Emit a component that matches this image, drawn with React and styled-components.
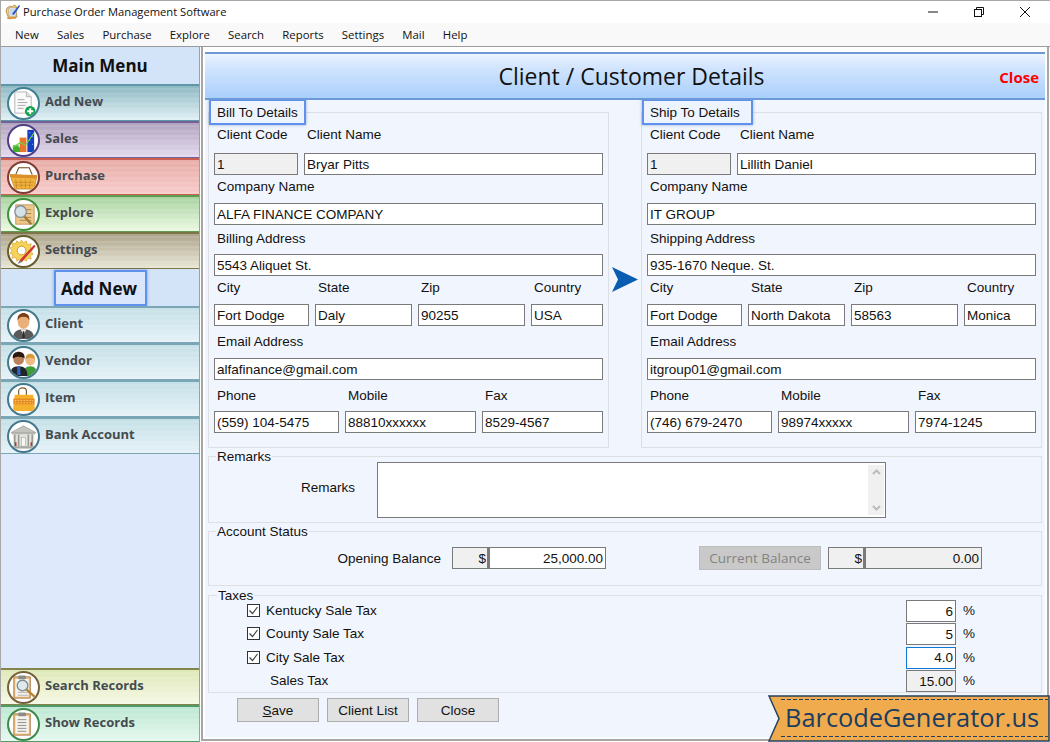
import React from 'react';
import styled, { createGlobalStyle } from 'styled-components';

const GlobalStyle = createGlobalStyle`
  html, body {
    margin: 0;
    padding: 0;
    background: #fff;
  }
  * {
    box-sizing: border-box;
  }
`;

const tones = {
  teal: { border: '#5f97a8', from: '#8db8c3', to: '#e0f0f4' },
  violet: { border: '#73619a', from: '#b2a3bf', to: '#e3daee' },
  red: { border: '#c9604f', from: '#e8ada6', to: '#f7cbcb' },
  green: { border: '#5f9c50', from: '#a8d3a0', to: '#ecf9e2' },
  khaki: { border: '#7d7647', from: '#ada48b', to: '#e9e6d6' },
  sky: { border: '#7aa6b6', from: '#c5e0e7', to: '#e5f2f8' },
  olive: { border: '#84834c', from: '#dfe8b8', to: '#f5f8e4' },
  mint: { border: '#4e9a68', from: '#bde8d2', to: '#e6f9ef' },
};

const Window = styled.div`
  width: 1050px;
  height: 742px;
  position: relative;
  overflow: hidden;
  background: #fff;
  border-top: 1px solid #a8a8a8;
  border-left: 1px solid #a8a8a8;
  display: flex;
  flex-direction: column;
  font-family: "Liberation Sans", Arial, sans-serif;
  font-size: 13.5px;
  color: #111;
`;

const TitleBar = styled.div`
  height: 22px;
  flex: none;
  display: flex;
  align-items: center;
  padding-left: 4px;
  padding-bottom: 1px;
  background: #fff;
  font-family: "Open Sans", sans-serif;
  font-size: 11.2px;
  color: #111;
`;

const AppTitle = styled.span`
  margin-left: 2px;
`;

const WindowButtons = styled.div`
  margin-left: auto;
  display: flex;
  align-items: center;
  gap: 34px;
  padding-right: 19px;
`;

const MenuBar = styled.div`
  height: 24px;
  flex: none;
  display: flex;
  align-items: center;
  gap: 18.2px;
  padding-left: 14px;
  background: #f9f9f9;
  font-family: "Open Sans", sans-serif;
  font-size: 11.4px;
  color: #111;
  border-bottom: 1px solid #9c9c9c;
`;

const Body = styled.div`
  flex: 1;
  min-height: 0;
  display: flex;
`;

const Sidebar = styled.div`
  width: 199px;
  flex: none;
  display: flex;
  flex-direction: column;
  background: #deeafc;
  border-right: 1px solid #8fa6b0;
  font-family: "Open Sans", sans-serif;
`;

const SideHeader = styled.div`
  height: ${(p) => p.$height}px;
  flex: none;
  display: flex;
  align-items: ${(p) => (p.$boxed ? 'flex-end' : 'center')};
  justify-content: center;
  background: #d3e3f8;
  font-size: 17px;
  font-weight: 700;
  color: #111;
`;

const BoxedTitle = styled.span`
  width: 93px;
  height: 36px;
  margin-left: 1px;
  padding-right: 3px;
  display: flex;
  align-items: center;
  justify-content: center;
  border: 2px solid #5f92ec;
  box-shadow: 0 0 3px rgba(60, 90, 150, 0.5);
  background: #d9e6fb;
`;

const SideItem = styled.div`
  height: 37px;
  flex: none;
  display: flex;
  align-items: center;
  gap: 5px;
  padding-left: 6px;
  border-top: 2px solid ${(p) => tones[p.$tone].border};
  border-bottom: 1px solid ${(p) => tones[p.$tone].border};
  background:
    repeating-linear-gradient(0deg, rgba(255, 255, 255, 0.1) 0 2px, rgba(255, 255, 255, 0) 2px 5px),
    linear-gradient(180deg, ${(p) => tones[p.$tone].from}, ${(p) => tones[p.$tone].to});
  font-size: 13px;
  font-weight: 700;
  color: #444b50;
`;

const SideLabel = styled.span`
  margin-bottom: 4px;
`;

const IconRing = styled.span`
  width: 33px;
  height: 33px;
  flex: none;
  border-radius: 50%;
  background: #fff;
  border: 2px solid ${(p) => p.$color};
  display: flex;
  align-items: center;
  justify-content: center;
  overflow: hidden;
`;

const SideSpacer = styled.div`
  flex: 1;
`;

const Main = styled.div`
  flex: 1;
  min-width: 0;
  margin-left: 1px;
  margin-right: 1px;
  margin-bottom: 1px;
  padding: 5px 2px 2px 2px;
  border: solid #a6a6a6;
  border-width: 0 2px 2px 2px;
  display: flex;
`;

const Panel = styled.div`
  flex: 1;
  min-width: 0;
  background: #f1f6fe;
  display: flex;
  flex-direction: column;
`;

const PanelHeader = styled.div`
  height: 48px;
  flex: none;
  position: relative;
  display: flex;
  align-items: center;
  justify-content: center;
  border-top: 2px solid #6d9ad6;
  border-bottom: 2px solid #6d9ad6;
  background: linear-gradient(180deg, #edf5ff 0%, #d6e7fe 25%, #a9cffb 100%);
`;

const PanelTitle = styled.h1`
  margin: 0 0 0 13px;
  font-family: "Open Sans", sans-serif;
  font-size: 23px;
  font-weight: 400;
  color: #111;
`;

const CloseLink = styled.span`
  position: absolute;
  right: 6px;
  top: 13px;
  font-family: "Open Sans", sans-serif;
  font-size: 15px;
  font-weight: 700;
  color: #ff0000;
`;

const Content = styled.div`
  flex: 1;
  min-height: 0;
  padding: 0 3px;
  display: flex;
  flex-direction: column;
`;

const AddressRow = styled.div`
  display: flex;
  margin-top: -1px;
`;

const ArrowSlot = styled.div`
  width: 32px;
  flex: none;
  padding-top: 168px;
  display: flex;
  justify-content: center;
`;

const Group = styled.fieldset`
  margin: ${(p) => p.$top || 0}px 0 0 0;
  padding: 0 ${(p) => p.$side || 0}px ${(p) => p.$bottom || 0}px;
  min-width: 0;
  border: 1px solid #dcdfe4;
  flex: ${(p) => (p.$half ? '0 0 401px' : 'none')};
  width: ${(p) => (p.$half ? '401px' : 'auto')};
  height: ${(p) => (p.$height ? `${p.$height}px` : 'auto')};
`;

const GroupLegend = styled.legend`
  margin-left: ${(p) => p.$left || 0}px;
  padding: 0 1px;
  height: 12px;
  line-height: 14px;
  color: #111;
`;

const BoxLegend = styled.legend`
  width: ${(p) => p.$width}px;
  margin-left: -5px;
  padding: 0 0 0 6px;
  height: 26px;
  line-height: 23px;
  border: 2px solid #5f92ec;
  box-shadow: 0 0 3px rgba(60, 90, 150, 0.45);
  background: #eef4fe;
  color: #111;
`;

const Cells = styled.div`
  display: grid;
  grid-template-columns: ${(p) => p.$cols};
  column-gap: 6px;
  margin-top: ${(p) => p.$top}px;
`;

const FieldLabel = styled.label`
  display: block;
  height: 20px;
  line-height: 20px;
  padding-left: 3px;
  white-space: nowrap;
`;

const Field = styled.input`
  width: 100%;
  height: 22px;
  margin: 0;
  padding: 0 2px;
  border: 1px solid ${(p) => (p.$focus ? '#0f78d4' : '#7a7a7a')};
  border-radius: 0;
  outline: none;
  background: ${(p) => (p.$muted ? '#f0f0f0' : '#fff')};
  font-family: inherit;
  font-size: 13.5px;
  color: #111;
  text-align: ${(p) => (p.$right ? 'right' : 'left')};
`;

const RemarksRow = styled.div`
  display: flex;
  height: 56px;
`;

const RemarksLabel = styled.label`
  width: 146px;
  flex: none;
  padding-top: 18px;
  line-height: 16px;
  text-align: right;
`;

const RemarksBox = styled.div`
  width: 509px;
  margin-left: 22px;
  display: flex;
  justify-content: flex-end;
  padding: 2px 1px 2px 0;
  border: 1px solid #7a7a7a;
  background: #fff;
`;

const ScrollTrack = styled.div`
  width: 16px;
  display: flex;
  flex-direction: column;
  justify-content: space-between;
  align-items: center;
  padding: 4px 0;
  background: #f0f0f0;
`;

const BalanceRow = styled.div`
  display: flex;
  align-items: center;
  height: 24px;
  margin-top: 9px;
`;

const BalanceLabel = styled.label`
  width: 232px;
  flex: none;
  text-align: right;
`;

const Money = styled.div`
  display: flex;
  margin-left: ${(p) => p.$left}px;
`;

const Currency = styled(Field)`
  width: 37px;
  flex: none;
  padding-right: 1px;
  border-right-width: 2px;
`;

const Amount = styled(Field)`
  width: 117px;
  flex: none;
`;

const DisabledButton = styled.button`
  width: 122px;
  height: 24px;
  margin-left: 93px;
  padding: 0;
  border: 1px solid #bdbdbd;
  background: #c9c9c9;
  font-family: "Open Sans", sans-serif;
  font-size: 13.5px;
  color: #838383;
`;

const TaxList = styled.div`
  margin-top: -1px;
`;

const TaxRow = styled.div`
  display: flex;
  align-items: flex-start;
  height: 23.4px;
  line-height: 22px;
  padding-left: ${(p) => p.$indent}px;
`;

const Tick = styled.span`
  width: 13px;
  height: 13px;
  flex: none;
  margin: 4px 6px 0 0;
  border: 1px solid #333;
  background: #fff;
  display: flex;
  align-items: center;
  justify-content: center;
`;

const TaxValue = styled.div`
  margin-left: auto;
  width: 50px;
  flex: none;
`;

const Percent = styled.span`
  width: 85px;
  flex: none;
  padding-left: 7px;
`;

const Footer = styled.div`
  display: flex;
  gap: 8px;
  padding: 5px 0 0 29px;
`;

const ActionButton = styled.button`
  width: 82px;
  height: 24px;
  padding: 0;
  border: 1px solid #adadad;
  background: #e1e1e1;
  font-family: "Liberation Sans", Arial, sans-serif;
  font-size: 13.5px;
  color: #111;
`;

const Banner = styled.div`
  position: absolute;
  left: 767px;
  top: 694px;
  width: 282px;
  height: 47px;
  display: flex;
  align-items: center;
  padding: 0 0 3px 17px;
  font-family: "Open Sans", sans-serif;
  font-size: 25.4px;
  color: #1d3d5e;
`;

const BannerShape = styled.svg`
  position: absolute;
  left: 0;
  top: 0;
`;

const BannerText = styled.span`
  position: relative;
`;

const AppIcon = () => (
  <svg width="16" height="18" viewBox="0 0 16 18">
    <path d="M2 5l3-2 2 1 2-2 2 1 1 3-1 2 1 6-8 2-2-5-1-3z" fill="#f2cf7a" stroke="#a8792a" strokeWidth=".7" />
    <rect x="4" y="5" width="7" height="8" fill="#fff" stroke="#7f8fb0" strokeWidth=".6" />
    <path d="M5 7h5M5 9h5M5 11h3" stroke="#6f86c0" strokeWidth=".7" />
    <path d="M7 11l7-9 1 1-6 9z" fill="#2a55c8" />
    <path d="M2 15h9" stroke="#d9862a" strokeWidth="1.2" />
  </svg>
);

const Minimize = () => (
  <svg width="12" height="12" viewBox="0 0 12 12"><path d="M1 6h10" stroke="#111" /></svg>
);

const Restore = () => (
  <svg width="12" height="12" viewBox="0 0 12 12" fill="none" stroke="#111">
    <rect x="1.5" y="3.5" width="7" height="7" />
    <path d="M3.5 3.5v-2h7v7h-2" />
  </svg>
);

const CloseX = () => (
  <svg width="12" height="12" viewBox="0 0 12 12"><path d="M1 1l10 10M11 1L1 11" stroke="#111" /></svg>
);

const Check = () => (
  <svg width="11" height="11" viewBox="0 0 11 11"><path d="M1.5 5.5l3 3 5-6.5" fill="none" stroke="#444" strokeWidth="1.2" /></svg>
);

const Chevron = ({ down }) => (
  <svg width="9" height="6" viewBox="0 0 9 6">
    <path d={down ? 'M1 1l3.5 3.5L8 1' : 'M1 5l3.5-3.5L8 5'} fill="none" stroke="#bcbcbc" strokeWidth="2" />
  </svg>
);

const Clipboard = () => (
  <>
    <rect x="5" y="4" width="17" height="22" fill="#e9b87a" stroke="#a56d33" strokeWidth=".8" />
    <rect x="6.5" y="6" width="14" height="18.5" fill="#f5f3ec" />
    <rect x="9.5" y="2.5" width="8" height="4" rx="1" fill="#8b8b8b" />
  </>
);

const icons = {
  addNew: (
    <>
      <path d="M6 3h12l5 5v17H6z" fill="#fafafa" stroke="#a3a3a3" strokeWidth=".8" />
      <path d="M18 3v5h5" fill="#dedede" stroke="#a3a3a3" strokeWidth=".7" />
      <path d="M9 11h7M9 14h10M9 17h8M9 20h6" stroke="#a8a8a8" />
      <circle cx="22" cy="23" r="5.5" fill="#13a04a" />
      <path d="M22 19.8v6.4M18.8 23h6.4" stroke="#fff" strokeWidth="2" />
    </>
  ),
  sales: (
    <>
      <path d="M3 27l6-5h6v5z" fill="#3cae2c" />
      <rect x="4" y="20" width="6" height="7" fill="#41b22e" />
      <rect x="11" y="12" width="7" height="15" fill="#e8762a" />
      <rect x="19" y="4" width="7" height="23" fill="#1240c0" />
      <path d="M4 22l8-5 5 3 9-13" fill="none" stroke="#6fd04a" strokeWidth="1.2" />
      <path d="M21 7h1M24 11h1M21 15h1M24 19h1" stroke="#8fb0ff" />
    </>
  ),
  purchase: (
    <>
      <path d="M7 12L10 5h11l3 7" fill="none" stroke="#6b4a22" strokeWidth="1.1" />
      <path d="M1 12l28 1-3 14H6z" fill="#f1b43c" stroke="#b77a1d" strokeWidth=".7" />
      <path d="M1 12l28 1-1 3-26-1z" fill="#dc8e28" />
      <path d="M7 17l1 9M12 17l1 9M17 17v9M22 17l-1 9M5 20h21M6 23h19" stroke="#c9852a" strokeWidth=".8" />
    </>
  ),
  explore: (
    <>
      <rect x="7" y="5" width="19" height="20" fill="#edc88c" stroke="#b58a4c" strokeWidth=".8" />
      <path d="M15 10h8M17 14h6M17 18h6M11 21h12" stroke="#b4843f" />
      <circle cx="12" cy="12" r="6" fill="#d5e3e8" stroke="#85919a" strokeWidth="1.4" />
      <path d="M16 17l7 8" stroke="#9f7a3a" strokeWidth="2.4" />
    </>
  ),
  settings: (
    <>
      <path d="M13 3l2 3 3-2 1 4 4-1-1 4 3 1-2 3 2 3-3 1 1 4-4-1-1 3-3-2-2 3-2-3-3 2-1-4-4 1 1-4-3-1 2-3-2-3 3-1-1-4 4 1 1-3 3 2z" fill="#f6d25c" stroke="#c79a26" strokeWidth=".6" />
      <circle cx="13" cy="14" r="4.500" fill="#fff" stroke="#c79a26" />
      <path d="M11 24L26 8l1.500 1.500L13 26z" fill="#cf3232" />
      <path d="M9 28l2-4 2 2z" fill="#777" />
    </>
  ),
  client: (
    <>
      <path d="M4 29c0-8 5-10 11-10s11 2 11 10z" fill="#5a5a5a" />
      <path d="M12 19l3 6 3-6z" fill="#eee" />
      <path d="M14.2 21h1.6l.6 7h-2.8z" fill="#2e2e2e" />
      <ellipse cx="15" cy="11" rx="6" ry="7.5" fill="#e9b07c" />
      <path d="M9 10c-1-6 3-8 6-8s7 2 6 8c-1-3-3-4-6-4s-5 1-6 4z" fill="#7c3f16" />
    </>
  ),
  vendor: (
    <>
      <path d="M15 29c0-7 2-10 7-10s7 3 7 10z" fill="#3f9a3a" />
      <circle cx="22" cy="13" r="5" fill="#eebb85" />
      <path d="M17 12c0-5 3-6 5-6s5 1 5 6c-2-2-7-3-10 0z" fill="#d49a3c" />
      <path d="M1 29c0-7 3-10 9-10s9 3 9 10z" fill="#23242a" />
      <path d="M8.5 19h3l.5 9h-3.500z" fill="#2b66c8" />
      <circle cx="10" cy="12" r="5.500" fill="#b9825a" />
      <path d="M4 11c-1-5 3-7 6-7s7 2 6 7c-2-2-8-3-12 0z" fill="#2a1a10" />
    </>
  ),
  item: (
    <>
      <path d="M10 11V6c0-4 8-4 8 0v5" fill="none" stroke="#7b5a2a" strokeWidth="1.2" />
      <path d="M6 10h19l2 17H4z" fill="#f5b02c" />
      <rect x="4.500" y="14" width="22" height="6" fill="#e58a1e" />
      <path d="M6 16h19M6 18.500h19" stroke="#fbd27a" strokeDasharray="1.500 1.500" />
    </>
  ),
  bank: (
    <>
      <path d="M15 4l13 7H2z" fill="#c4c4bf" stroke="#8e8e8a" strokeWidth=".6" />
      <rect x="3" y="11" width="24" height="2" fill="#b4b4ae" />
      <rect x="4" y="13" width="22" height="12" fill="#e4e4de" />
      <path d="M6 13v12M10 13v12M20 13v12M24 13v12" stroke="#9a9a94" strokeWidth="1.6" />
      <rect x="13" y="16" width="4" height="9" fill="#f6f6f2" stroke="#9a9a94" strokeWidth=".5" />
      <path d="M7 21v4M23 21v4" stroke="#a82a2a" strokeWidth="1.400" />
      <rect x="2" y="25" width="26" height="2.500" fill="#a9a9a3" />
    </>
  ),
  search: (
    <>
      <Clipboard />
      <path d="M9 20h11M9 23h11" stroke="#b0b0b0" />
      <circle cx="14" cy="13" r="5.500" fill="#dfe9ec" stroke="#7c8b92" strokeWidth="1.400" />
      <path d="M18 17l9 8" stroke="#b9822e" strokeWidth="2.400" />
    </>
  ),
  show: (
    <>
      <Clipboard />
      <path d="M9 10h9M9 13h9M9 16h9M9 19h9M9 22h9" stroke="#8c8c8c" />
    </>
  ),
};

const SideEntry = ({ tone, ring, icon, label }) => (
  <SideItem $tone={tone}>
    <IconRing $color={ring}>
      <svg width="29" height="29" viewBox="0 0 30 30">{icons[icon]}</svg>
    </IconRing>
    <SideLabel>{label}</SideLabel>
  </SideItem>
);

const topMenu = [
  { tone: 'teal', ring: '#3f7f90', icon: 'addNew', label: 'Add New' },
  { tone: 'violet', ring: '#4f3f85', icon: 'sales', label: 'Sales' },
  { tone: 'red', ring: '#7e3b32', icon: 'purchase', label: 'Purchase' },
  { tone: 'green', ring: '#3f8f3a', icon: 'explore', label: 'Explore' },
  { tone: 'khaki', ring: '#665c2c', icon: 'settings', label: 'Settings' },
];

const addMenu = [
  { tone: 'sky', ring: '#44788c', icon: 'client', label: 'Client' },
  { tone: 'sky', ring: '#44788c', icon: 'vendor', label: 'Vendor' },
  { tone: 'sky', ring: '#44788c', icon: 'item', label: 'Item' },
  { tone: 'sky', ring: '#44788c', icon: 'bank', label: 'Bank Account' },
];

const bottomMenu = [
  { tone: 'olive', ring: '#74603a', icon: 'search', label: 'Search Records' },
  { tone: 'mint', ring: '#3d8a48', icon: 'show', label: 'Show Records' },
];

const billTo = {
  title: 'Bill To Details',
  legendWidth: 97,
  addressLabel: 'Billing Address',
  code: '1',
  name: 'Bryar Pitts',
  company: 'ALFA FINANCE COMPANY',
  address: '5543 Aliquet St.',
  city: 'Fort Dodge',
  state: 'Daly',
  zip: '90255',
  country: 'USA',
  email: 'alfafinance@gmail.com',
  phone: '(559) 104-5475',
  mobile: '88810xxxxxx',
  fax: '8529-4567',
};

const shipTo = {
  title: 'Ship To Details',
  legendWidth: 111,
  addressLabel: 'Shipping Address',
  code: '1',
  name: 'Lillith Daniel',
  company: 'IT GROUP',
  address: '935-1670 Neque. St.',
  city: 'Fort Dodge',
  state: 'North Dakota',
  zip: '58563',
  country: 'Monica',
  email: 'itgroup01@gmail.com',
  phone: '(746) 679-2470',
  mobile: '98974xxxxx',
  fax: '7974-1245',
};

const AddressGroup = ({ data }) => (
  <Group $half $side={5} $height={349}>
    <BoxLegend $width={data.legendWidth}>{data.title}</BoxLegend>
    <Cells $cols="84px 299px" $top={0}>
      <FieldLabel>Client Code</FieldLabel>
      <FieldLabel>Client Name</FieldLabel>
    </Cells>
    <Cells $cols="84px 299px" $top={8}>
      <Field $muted readOnly value={data.code} />
      <Field readOnly value={data.name} />
    </Cells>
    <Cells $cols="1fr" $top={2}>
      <FieldLabel>Company Name</FieldLabel>
    </Cells>
    <Cells $cols="1fr" $top={6}>
      <Field readOnly value={data.company} />
    </Cells>
    <Cells $cols="1fr" $top={4}>
      <FieldLabel>{data.addressLabel}</FieldLabel>
    </Cells>
    <Cells $cols="1fr" $top={5}>
      <Field readOnly value={data.address} />
    </Cells>
    <Cells $cols="95px 97px 107px 72px" $top={2}>
      <FieldLabel>City</FieldLabel>
      <FieldLabel>State</FieldLabel>
      <FieldLabel>Zip</FieldLabel>
      <FieldLabel>Country</FieldLabel>
    </Cells>
    <Cells $cols="95px 97px 107px 72px" $top={6}>
      <Field readOnly value={data.city} />
      <Field readOnly value={data.state} />
      <Field readOnly value={data.zip} />
      <Field readOnly value={data.country} />
    </Cells>
    <Cells $cols="1fr" $top={6}>
      <FieldLabel>Email Address</FieldLabel>
    </Cells>
    <Cells $cols="1fr" $top={6}>
      <Field readOnly value={data.email} />
    </Cells>
    <Cells $cols="125px 131px 121px" $top={6}>
      <FieldLabel>Phone</FieldLabel>
      <FieldLabel>Mobile</FieldLabel>
      <FieldLabel>Fax</FieldLabel>
    </Cells>
    <Cells $cols="125px 131px 121px" $top={5}>
      <Field readOnly value={data.phone} />
      <Field readOnly value={data.mobile} />
      <Field readOnly value={data.fax} />
    </Cells>
  </Group>
);

const taxes = [
  { label: 'Kentucky Sale Tax', value: '6' },
  { label: 'County Sale Tax', value: '5' },
  { label: 'City Sale Tax', value: '4.0', focus: true },
];

const App = () => (
  <>
    <GlobalStyle />
    <Window>
      <TitleBar>
        <AppIcon />
        <AppTitle>Purchase Order Management Software</AppTitle>
        <WindowButtons>
          <Minimize />
          <Restore />
          <CloseX />
        </WindowButtons>
      </TitleBar>
      <MenuBar>
        {['New', 'Sales', 'Purchase', 'Explore', 'Search', 'Reports', 'Settings', 'Mail', 'Help'].map((m) => (
          <span key={m}>{m}</span>
        ))}
      </MenuBar>
      <Body>
        <Sidebar>
          <SideHeader $height={37}>Main Menu</SideHeader>
          {topMenu.map((item) => <SideEntry key={item.label} {...item} />)}
          <SideHeader $height={37} $boxed><BoxedTitle>Add New</BoxedTitle></SideHeader>
          {addMenu.map((item) => <SideEntry key={item.label} {...item} />)}
          <SideSpacer />
          {bottomMenu.map((item) => <SideEntry key={item.label} {...item} />)}
        </Sidebar>
        <Main>
          <Panel>
            <PanelHeader>
              <PanelTitle>Client / Customer Details</PanelTitle>
              <CloseLink>Close</CloseLink>
            </PanelHeader>
            <Content>
              <AddressRow>
                <AddressGroup data={billTo} />
                <ArrowSlot>
                  <svg width="26" height="25" viewBox="0 0 26 25">
                    <path d="M0 0l26 12.500L0 25l6-12.500z" fill="#0a5cb0" />
                  </svg>
                </ArrowSlot>
                <AddressGroup data={shipTo} />
              </AddressRow>
              <Group $top={2} $bottom={4}>
                <GroupLegend $left={7}>Remarks</GroupLegend>
                <RemarksRow>
                  <RemarksLabel>Remarks</RemarksLabel>
                  <RemarksBox>
                    <ScrollTrack>
                      <Chevron />
                      <Chevron down />
                    </ScrollTrack>
                  </RemarksBox>
                </RemarksRow>
              </Group>
              <Group $top={2} $height={61}>
                <GroupLegend $left={7}>Account Status</GroupLegend>
                <BalanceRow>
                  <BalanceLabel>Opening Balance</BalanceLabel>
                  <Money $left={11}>
                    <Currency $muted $right readOnly value="$" />
                    <Amount $right readOnly value="25,000.00" />
                  </Money>
                  <DisabledButton>Current Balance</DisabledButton>
                  <Money $left={7}>
                    <Currency $muted $right readOnly value="$" />
                    <Amount $muted $right readOnly value="0.00" />
                  </Money>
                </BalanceRow>
              </Group>
              <Group $top={3} $height={104}>
                <GroupLegend $left={8}>Taxes</GroupLegend>
                <TaxList>
                  {taxes.map((t) => (
                    <TaxRow key={t.label} $indent={38}>
                      <Tick><Check /></Tick>
                      <span>{t.label}</span>
                      <TaxValue><Field $right $focus={t.focus} readOnly value={t.value} /></TaxValue>
                      <Percent>%</Percent>
                    </TaxRow>
                  ))}
                  <TaxRow $indent={61}>
                    <span>Sales Tax</span>
                    <TaxValue><Field $right $muted readOnly value="15.00" /></TaxValue>
                    <Percent>%</Percent>
                  </TaxRow>
                </TaxList>
              </Group>
              <Footer>
                <ActionButton><u>S</u>ave</ActionButton>
                <ActionButton>Client List</ActionButton>
                <ActionButton>Close</ActionButton>
              </Footer>
            </Content>
          </Panel>
        </Main>
      </Body>
      <Banner>
        <BannerShape width="282" height="47" viewBox="0 0 282 47">
          <path d="M1 1H281V46H1L11 23.500z" fill="#f0ab4f" stroke="#24405f" strokeWidth="1.500" />
          <path d="M13 4.500H280M13 41.500H280" stroke="#24405f" strokeDasharray="4 2" />
        </BannerShape>
        <BannerText>BarcodeGenerator.us</BannerText>
      </Banner>
    </Window>
  </>
);

export default App;
